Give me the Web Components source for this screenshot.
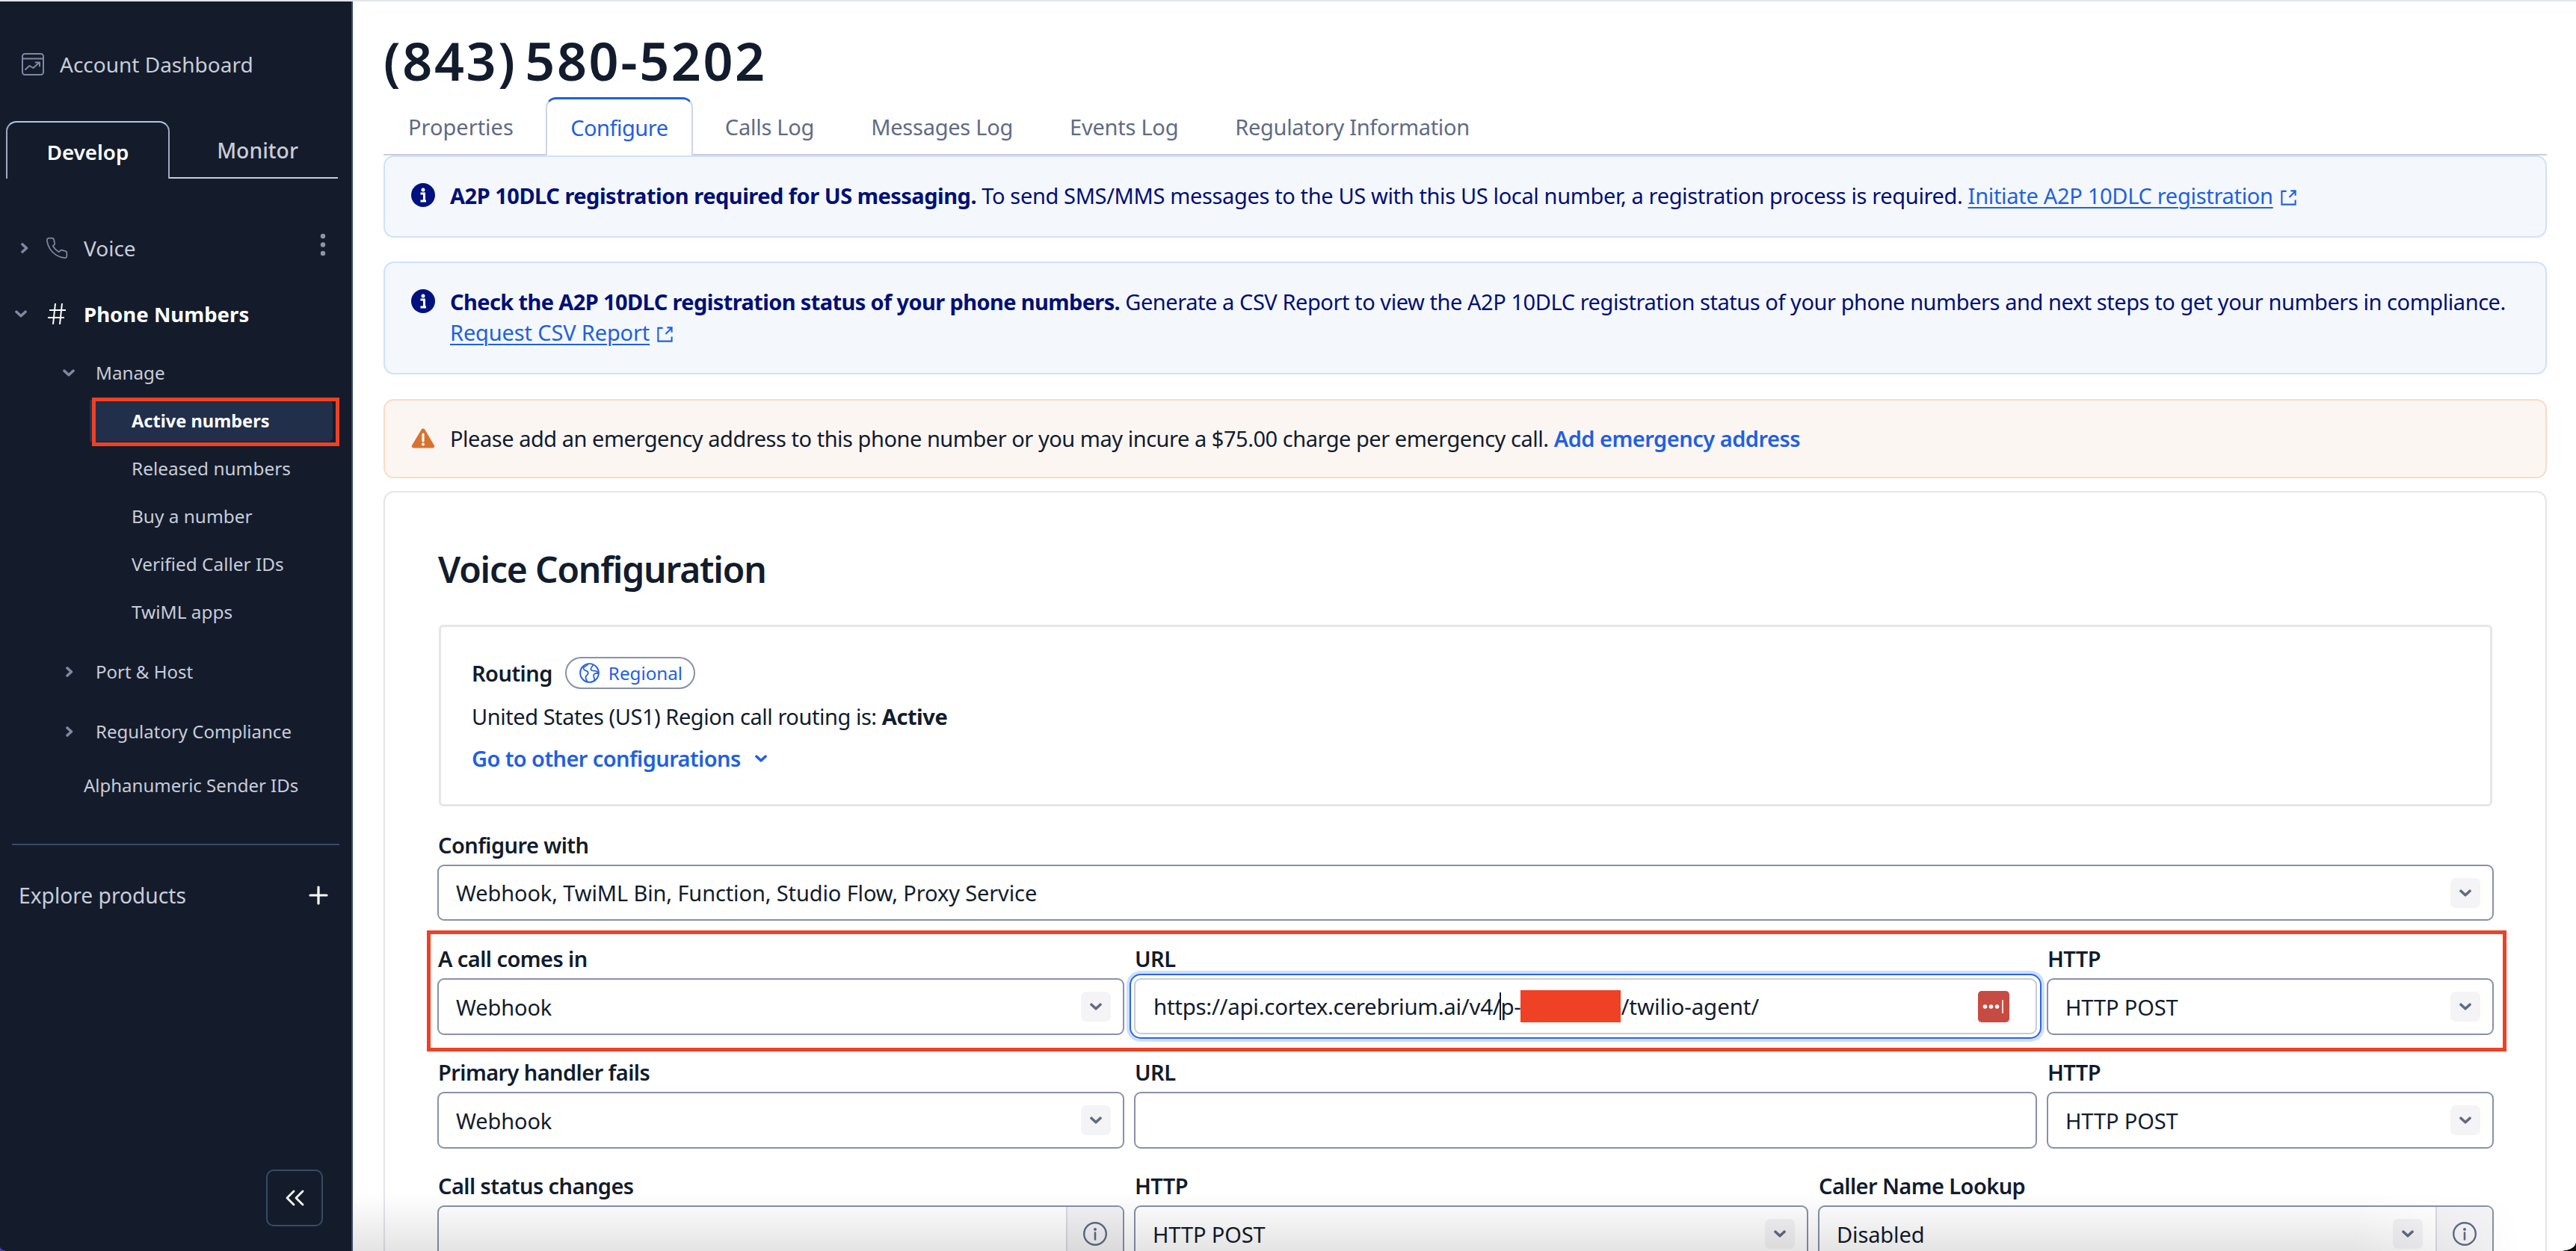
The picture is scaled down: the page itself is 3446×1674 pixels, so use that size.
<!doctype html>
<html lang="en"><head><meta charset="utf-8"><title>(843) 580-5202</title>
<style>
html,body{margin:0;padding:0;background:#fff;overflow:hidden}
body{font-family:"Noto Sans",sans-serif;color:#121c2d}
</style></head><body>
<x-app>
  <x-side slot="side">
    <x-nav style="margin-top:60px;height:48px;--x:80px;--fs:28px;--c:#c8ccd8">
      <x-icon slot="lead" name="dash" w="30" h="30" style="margin-left:29px;color:#7f889f"></x-icon>Account Dashboard</x-nav>
    <x-sidetabs style="margin:52px 18px 0 8px"></x-sidetabs>
    <x-nav style="margin-top:63px;height:60px;--x:112px;--fs:28px;--c:#c8ccd8">
      <span slot="lead" style="display:flex;align-items:center;margin-left:28px;gap:22px;color:#7f889f"><x-icon name="chev-r" w="10" h="14"></x-icon><x-icon name="phone" w="32" h="32"></x-icon></span>Voice<x-icon slot="end" name="dots" w="8" h="32" style="color:#8f96a8;margin-right:34px;margin-top:-8px"></x-icon></x-nav>
    <x-nav style="margin-top:28px;height:60px;--x:112px;--fs:27.6px;--c:#fff;--w:700">
      <span slot="lead" style="display:flex;align-items:center;margin-left:20px;gap:28px"><x-icon name="chev-d" w="16" h="10" style="color:#7f889f"></x-icon><x-icon name="hash" w="24" h="30" style="color:#fff"></x-icon></span>Phone Numbers</x-nav>
    <x-nav style="margin-top:24px;height:50px;--x:128px;--fs:24.2px;--c:#c8ccd8">
      <x-icon slot="lead" name="chev-d" w="16" h="10" style="margin-left:84px;color:#7f889f"></x-icon>Manage</x-nav>
    <x-nav active style="margin:11px 25px 4px 120px;height:56px;--x:56px;--fs:23.6px;--c:#fff;--w:700">Active numbers</x-nav>
    <x-nav style="height:64px;--x:176px;--fs:24.4px;--c:#c8ccd8">Released numbers</x-nav>
    <x-nav style="height:64px;--x:176px;--fs:24.4px;--c:#c8ccd8">Buy a number</x-nav>
    <x-nav style="height:64px;--x:176px;--fs:24.4px;--c:#c8ccd8">Verified Caller IDs</x-nav>
    <x-nav style="height:64px;--x:176px;--fs:24.4px;--c:#c8ccd8">TwiML apps</x-nav>
    <x-nav style="margin-top:18px;height:60px;--x:128px;--fs:24px;--c:#c8ccd8">
      <x-icon slot="lead" name="chev-r" w="10" h="14" style="margin-left:88px;color:#7f889f"></x-icon>Port &amp; Host</x-nav>
    <x-nav style="margin-top:20px;height:60px;--x:128px;--fs:24px;--c:#c8ccd8">
      <x-icon slot="lead" name="chev-r" w="10" h="14" style="margin-left:88px;color:#7f889f"></x-icon>Regulatory Compliance</x-nav>
    <x-nav style="margin-top:12px;height:60px;--x:112px;--fs:24px;--c:#c8ccd8">Alphanumeric Sender IDs</x-nav>
    <x-divider style="margin:48px 16px 0 16px"></x-divider>
    <x-nav style="margin-top:37px;height:60px;--x:25px;--fs:28.200px;--c:#c8ccd8">Explore products<x-icon slot="end" name="plus" w="26" h="26" style="color:#fff;margin-right:31px"></x-icon></x-nav>
    <x-collapse style="margin:auto 38px 33px auto"></x-collapse>
  </x-side>

  <x-title>(843) 580-5202</x-title>
  <x-tabs>
    <x-tab style="letter-spacing:0">Properties</x-tab><x-tab active>Configure</x-tab><x-tab>Calls Log</x-tab><x-tab>Messages Log</x-tab><x-tab>Events Log</x-tab><x-tab style="letter-spacing:-.3px">Regulatory Information</x-tab>
  </x-tabs>
  <x-alert kind="info" style="height:110px"><b style="letter-spacing:-.5px">A2P 10DLC registration required for US messaging.</b><span style="letter-spacing:-.36px"> To send SMS/MMS messages to the US with this US local number, a registration process is required. </span><x-link style="letter-spacing:-.3px">Initiate A2P 10DLC registration</x-link></x-alert>
  <x-alert kind="info" style="height:151px;margin-top:32px"><b style="letter-spacing:-.62px">Check the A2P 10DLC registration status of your phone numbers.</b><span style="letter-spacing:-.44px"> Generate a CSV Report to view the A2P 10DLC registration status of your phone numbers and next steps to get your numbers in compliance.</span><br><x-link style="letter-spacing:-.15px">Request CSV Report</x-link></x-alert>
  <x-alert kind="warn" style="height:106px;margin-top:33px"><span style="letter-spacing:-.47px">Please add an emergency address to this phone number or you may incure a $75.00 charge per emergency call. </span><x-strong-link>Add emergency address</x-strong-link></x-alert>
  <x-card>
    <x-heading>Voice Configuration</x-heading>
    <x-routing></x-routing>
    <x-field label="Configure with" style="margin-top:32px"><x-select style="height:75px">Webhook, TwiML Bin, Function, Studio Flow, Proxy Service</x-select></x-field>
    <x-mark>
      <x-grid cols="919px 1208px 1fr">
        <x-field label="A call comes in"><x-select>Webhook</x-select></x-field>
        <x-field label="URL"><x-input focus><span>https://api.cortex.cerebrium.ai/v4/</span><x-caret></x-caret><span>p-</span><x-redact></x-redact><span style="letter-spacing:-.1px">/twilio-agent/</span><x-icon slot="end" name="pw" w="42" h="42"></x-icon></x-input></x-field>
        <x-field label="HTTP"><x-select>HTTP POST</x-select></x-field>
      </x-grid>
    </x-mark>
    <x-grid cols="919px 1208px 1fr" style="margin-top:8px">
      <x-field label="Primary handler fails"><x-select>Webhook</x-select></x-field>
      <x-field label="URL"><x-input></x-input></x-field>
      <x-field label="HTTP"><x-select>HTTP POST</x-select></x-field>
    </x-grid>
    <x-grid cols="919px 902px 1fr" style="margin-top:30px">
      <x-field label="Call status changes"><x-input info></x-input></x-field>
      <x-field label="HTTP"><x-select>HTTP POST</x-select></x-field>
      <x-field label="Caller Name Lookup"><x-select info>Disabled</x-select></x-field>
    </x-grid>
  </x-card>
</x-app>
<script>
const ICONS={
 dash:['0 0 30 30','<rect x="1" y="1" width="28" height="28" rx="3.500" fill="none" stroke="currentColor" stroke-width="2"/><path d="M1 7.500h28M5 22l5.500-5 5 3 7.500-7M18.500 12.500h5.500v5" fill="none" stroke="currentColor" stroke-width="2" stroke-linecap="round" stroke-linejoin="round"/>'],
 'chev-r':['0 0 10 14','<path d="M2 2l5.500 5L2 12" fill="none" stroke="currentColor" stroke-width="3.600" stroke-linecap="round" stroke-linejoin="round"/>'],
 'chev-d':['0 0 16 10','<path d="M2 2.200l6 5.600 6-5.600" fill="none" stroke="currentColor" stroke-width="3.600" stroke-linecap="round" stroke-linejoin="round"/>'],
 phone:['0 0 24 24','<path d="M22 16.920v3a2 2 0 0 1-2.180 2 19.790 19.790 0 0 1-8.630-3.070 19.500 19.500 0 0 1-6-6 19.790 19.790 0 0 1-3.070-8.670A2 2 0 0 1 4.110 2h3a2 2 0 0 1 2 1.720c.128.960.361 1.903.7 2.810a2 2 0 0 1-.45 2.110L8.090 9.910a16 16 0 0 0 6 6l1.270-1.270a2 2 0 0 1 2.110-.45c.907.339 1.850.573 2.810.7A2 2 0 0 1 22 16.920z" fill="none" stroke="currentColor" stroke-width="1.300" stroke-linejoin="round"/>'],
 hash:['0 0 24 30','<path d="M10 1L7 29M19 1l-3 28M2 10h22M0 20h22" fill="none" stroke="currentColor" stroke-width="2"/>'],
 dots:['0 0 8 32','<circle cx="4" cy="4" r="3.200" fill="currentColor"/><circle cx="4" cy="15.500" r="3.200" fill="currentColor"/><circle cx="4" cy="27" r="3.200" fill="currentColor"/>'],
 plus:['0 0 26 26','<path d="M13 2v22M2 13h22" fill="none" stroke="currentColor" stroke-width="3.200" stroke-linecap="round"/>'],
 dbl:['0 0 26 22','<path d="M12 2L3 11l9 9M24 2l-9 9 9 9" fill="none" stroke="currentColor" stroke-width="2.800" stroke-linecap="round" stroke-linejoin="round"/>'],
 infoF:['0 0 32 32','<circle cx="16" cy="16" r="16" fill="#00127f"/><circle cx="16" cy="9" r="2.500" fill="#fff"/><path d="M12.500 14h5v10h2.500M12.500 24h7.500" fill="none" stroke="#fff" stroke-width="3"/>'],
 warn:['0 0 32 28','<path d="M16 1.500c1.200 0 2 .7 2.600 1.700l12.200 20.500c1 1.800 0 3.800-2.200 3.800H3.400c-2.200 0-3.200-2-2.200-3.800L13.400 3.200C14 2.200 14.800 1.500 16 1.500z" fill="#d9722e"/><path d="M16 9v9" stroke="#fff" stroke-width="3.200" stroke-linecap="round"/><circle cx="16" cy="22.500" r="2" fill="#fff"/>'],
 ext:['0 0 24 24','<path d="M9 3H2.500v18.500H21.500V15M13 11.500L21 3.500M15 2.500h6.500V9" fill="none" stroke="currentColor" stroke-width="2.200"/>'],
 globe:['0 0 28 28','<circle cx="14" cy="14" r="12.800" fill="none" stroke="currentColor" stroke-width="2"/><path d="M12 1.500c-1 3-5 3-6 5-1 2.500 1.500 4 3.500 4.500s3 2 2.500 4-2.500 2-3 4 .5 5 2 6.500M19 3c-1 2.500-3 3-3 5.500s3 2.500 5 2.500 4 1 5 2.500M27 15c-3-1-6-1-7 1.500s1 4 1 6c0 1.500-1 2.500-1 3.500" fill="none" stroke="currentColor" stroke-width="1.800"/>'],
 info:['0 0 32 32','<circle cx="16" cy="16" r="14.800" fill="none" stroke="currentColor" stroke-width="2.400"/><circle cx="16" cy="10" r="2" fill="currentColor"/><path d="M16 14.500v9" stroke="currentColor" stroke-width="2.600" stroke-linecap="round"/>'],
 pw:['0 0 42 42','<rect width="42" height="42" rx="5" fill="#c74b42"/><circle cx="9.500" cy="21" r="2.800" fill="#fff"/><circle cx="17.500" cy="21" r="2.800" fill="#fff"/><circle cx="25.500" cy="21" r="2.800" fill="#fff"/><path d="M33 12v18" stroke="#fff" stroke-width="1.600"/>']
};
function def(name,css,html,extra){
  customElements.define(name,class extends HTMLElement{
    constructor(){super();const r=this.attachShadow({mode:'open'});
      r.innerHTML='<style>'+css+'</style>'+(typeof html==='function'?html(this):html);}
    connectedCallback(){ if(extra) extra(this); }
  });
}
def('x-icon',':host{display:inline-flex;flex:none}svg{display:block}','',el=>{
  const n=el.getAttribute('name'),i=ICONS[n],w=el.getAttribute('w'),h=el.getAttribute('h');
  el.shadowRoot.innerHTML+='<svg width="'+w+'" height="'+h+'" viewBox="'+i[0]+'" preserveAspectRatio="none">'+i[1]+'</svg>';
});
def('x-app',`:host{display:flex;position:relative;box-sizing:border-box;width:3446px;height:1674px;border-top:2px solid #e3e5ec;overflow:hidden;background:#fff}
 .main{flex:1;min-width:0;padding:0 39px 0 41px}
 .fade{position:absolute;left:472px;right:0;bottom:0;height:76px;pointer-events:none;background:linear-gradient(to bottom,rgba(0,0,0,0),rgba(0,0,0,.105));-webkit-mask-image:linear-gradient(to right,#000 90%,transparent 97.500%);mask-image:linear-gradient(to right,#000 90%,transparent 97.500%)}
 .cr{position:absolute;right:0;bottom:0;width:21px;height:11px;pointer-events:none;background:radial-gradient(ellipse 21px 11px at 0 0,transparent 96%,#111 100%)}`,
 '<slot name="side"></slot><div class="main"><slot></slot></div><div class="fade"></div><div class="cr"></div>');
def('x-side',`:host{display:flex;flex-direction:column;flex:none;position:relative;box-sizing:border-box;width:472px;height:1672px;background:#141c2c;border-right:2px solid #3c4a68}
 .c{position:absolute;left:0;bottom:0;width:10px;height:6px;background:radial-gradient(ellipse 10px 6px at 100% 0,transparent 96%,#4a3fb0 100%)}`,
 '<slot></slot><div class="c"></div>');
def('x-nav',`:host{display:grid;grid-template-columns:var(--x) 1fr auto;align-items:center;position:relative;flex:none;font-size:var(--fs);line-height:40px;color:var(--c);font-weight:var(--w,400);white-space:nowrap}
 :host([active]){background:#212f4a;border-radius:0 6px 6px 0}
 .lead{display:flex;align-items:center}
 i{display:none;position:absolute;left:3px;top:-3px;width:331px;height:65px;box-sizing:border-box;border:5px solid #ee4125}
 :host([active]) i{display:block}`,
 '<div class="lead"><slot name="lead"></slot></div><div><slot></slot></div><slot name="end"></slot><i></i>');
def('x-sidetabs',`:host{display:flex;flex:none;height:77px;font-size:28.300px;color:#c8ccd8}
 .t{display:flex;align-items:center;justify-content:center;box-sizing:border-box;padding-top:3px}
 .a{width:219px;color:#fff;font-weight:600;font-size:27.700px;border:2px solid #a0aac0;border-top-color:#b4c6e6;border-bottom:0;border-radius:14px 14px 0 0}
 .b{flex:1;font-weight:500;padding-left:10px;border-bottom:2px solid #c8ccd8}`,
 '<div class="t a">Develop</div><div class="t b">Monitor</div>');
def('x-divider',':host{display:block;flex:none;height:2px;background:#3a4a66}','');
def('x-collapse',`:host{display:flex;align-items:center;justify-content:center;flex:none;box-sizing:border-box;width:76px;height:76px;border:2px solid #3a4a66;border-radius:10px;color:#fff}`,
 '<x-icon name="dbl" w="26" h="22"></x-icon>');
def('x-title',`:host{display:flex;align-items:center;box-sizing:content-box;height:98px;padding-top:30px;font-size:70px;font-weight:600;letter-spacing:2.600px;word-spacing:-10px;line-height:80px;white-space:nowrap}`,'<slot></slot>');
def('x-tabs',`:host{display:flex;gap:10px;box-sizing:border-box;height:78px;border-bottom:2px solid #c9cdd8}`,'<slot></slot>');
def('x-tab',`:host{display:flex;align-items:center;justify-content:center;box-sizing:border-box;height:76px;padding:2px 33px 0;font-size:29px;letter-spacing:-.25px;color:#606b85;white-space:nowrap}
 :host([active]){width:197px;height:78px;padding:0;color:#2160e0;letter-spacing:-.5px;background:#fff;border:2px solid #cbd5e8;border-top:3px solid #2160e0;border-bottom:0;border-radius:14px 14px 0 0}`,'<slot></slot>');
def('x-alert',`:host{display:flex;gap:20px;box-sizing:border-box;padding:31px 20px 0 35px;border:2px solid #cfe1fb;border-radius:14px;background:#f4f8fd;font-size:29px;line-height:41px;color:#030f75}
 :host([kind=warn]){padding-top:30px;background:#fcf6f3;border-color:#f9dcc4;color:#121c2d}
 x-icon{margin-top:4px}
 .t{flex:1;min-width:0}`,
 el=>(el.getAttribute('kind')==='warn'?'<x-icon name="warn" w="32" h="28" style="margin-top:6px"></x-icon>':'<x-icon name="infoF" w="32" h="32"></x-icon>')+'<div class="t"><slot></slot></div>');
def('x-link',`:host{display:inline;color:#2160e0}
 .u{text-decoration:underline;text-underline-offset:4px;text-decoration-thickness:2px}
 x-icon{display:inline-flex;margin-left:9px;vertical-align:-3px}`,
 '<span class="u"><slot></slot></span><x-icon name="ext" w="23" h="23"></x-icon>');
def('x-strong-link',':host{display:inline;color:#2160e0;font-weight:600;letter-spacing:-.5px}','<slot></slot>');
def('x-card',`:host{display:block;box-sizing:border-box;margin-top:17px;height:1400px;padding:73px 69px 0 70px;border:2px solid #e4e5ea;border-radius:14px 14px 0 0;background:#fff}`,'<slot></slot>');
def('x-heading',`:host{display:block;height:60px;margin-left:1px;font-size:48px;letter-spacing:-1.2px;line-height:60px;font-weight:600;white-space:nowrap}`,'<slot></slot>');
def('x-routing',`:host{display:block;box-sizing:border-box;height:243px;margin:44px 2px 0 2px;border:3px solid #e6e6e6;border-radius:6px;padding:40px 0 0 41px;font-size:29px;letter-spacing:-.45px;line-height:40px}
 .r{display:flex;align-items:center;gap:17px;height:43px;font-weight:600;letter-spacing:-.55px}
 .p{display:flex;align-items:center;gap:12px;box-sizing:border-box;width:174px;height:43px;padding-left:17px;border:2px solid #8891aa;border-radius:22px;color:#2160e0;font-weight:400;font-size:24.200px;letter-spacing:0}
 .u{margin-top:17px;height:40px}
 .g{display:flex;align-items:center;gap:19px;margin-top:16px;height:40px;color:#2160e0;font-weight:600;letter-spacing:-.6px}`,
 `<div class="r">Routing<div class="p"><x-icon name="globe" w="27" h="27"></x-icon>Regional</div></div>
  <div class="u">United States (US1) Region call routing is: <b>Active</b></div>
  <div class="g">Go to other configurations<x-icon name="chev-d" w="16" h="10"></x-icon></div>`);
def('x-field',`:host{display:flex;flex-direction:column;gap:6px;min-width:0}
 .l{height:40px;line-height:40px;font-size:29px;letter-spacing:-.58px;font-weight:600;padding-left:1px;white-space:nowrap}`,
 el=>'<div class="l">'+(el.getAttribute('label')||'')+'</div><slot></slot>');
def('x-select',`:host{display:flex;align-items:center;box-sizing:border-box;height:76px;padding:0 16px 0 23px;border:2px solid #8891aa;border-radius:9px;font-size:29px;letter-spacing:-.12px;white-space:nowrap;background:#fff;overflow:hidden}
 .t{flex:1;min-width:0}
 .b{display:flex;align-items:center;justify-content:center;flex:none;width:40px;height:40px;border-radius:7px;background:#f4f4f6;color:#606b85}
 :host([info]){padding-right:0}
 .a{display:none;align-items:center;justify-content:center;flex:none;width:74px;height:100%;margin-left:17px;border-left:2px solid #d8dae2;color:#606b85;background:#f4f4f6}
 :host([info]) .a{display:flex}`,
 `<div class="t"><slot></slot></div><div class="b"><x-icon name="chev-d" w="16" h="10"></x-icon></div><div class="a"><x-icon name="info" w="32" h="32"></x-icon></div>`);
def('x-input',`:host{display:flex;align-items:center;box-sizing:border-box;height:76px;padding:0 0 0 24px;border:2px solid #8891aa;border-radius:9px;font-size:29.500px;letter-spacing:-.3px;white-space:nowrap;background:#fff}
 :host([focus]){height:75px;border-color:#c8ccd6;padding-right:35px;box-shadow:0 0 0 4px #fff,0 0 0 6px #2a66e8,0 0 0 10px #cde0fb}
 .t{flex:1;min-width:0;display:flex;align-items:center}
 .a{display:none;align-items:center;justify-content:center;flex:none;width:74px;height:100%;border-left:2px solid #d8dae2;color:#606b85;background:#f4f4f6;border-radius:0 7px 7px 0}
 :host([info]){padding-right:0}
 :host([info]) .a{display:flex}`,
 `<div class="t"><slot></slot></div><slot name="end"></slot><div class="a"><x-icon name="info" w="32" h="32"></x-icon></div>`);
def('x-caret',':host{display:inline-block;flex:none;width:1.500px;height:37px;margin-right:-.5px;margin-left:-1px;background:#121c2d}','');
def('x-redact',':host{display:inline-block;flex:none;width:134px;height:43px;background:#ee4125}','');
def('x-grid',`:host{display:grid;column-gap:13px}`,'<slot></slot>',el=>{el.style.gridTemplateColumns=el.getAttribute('cols')});
def('x-mark',`:host{display:block;box-sizing:border-box;height:162px;margin:13px -17px 0 -14px;padding:13px 12px 0 9px;border:5px solid #ee4125}`,'<slot></slot>');
</script>
</body></html>
